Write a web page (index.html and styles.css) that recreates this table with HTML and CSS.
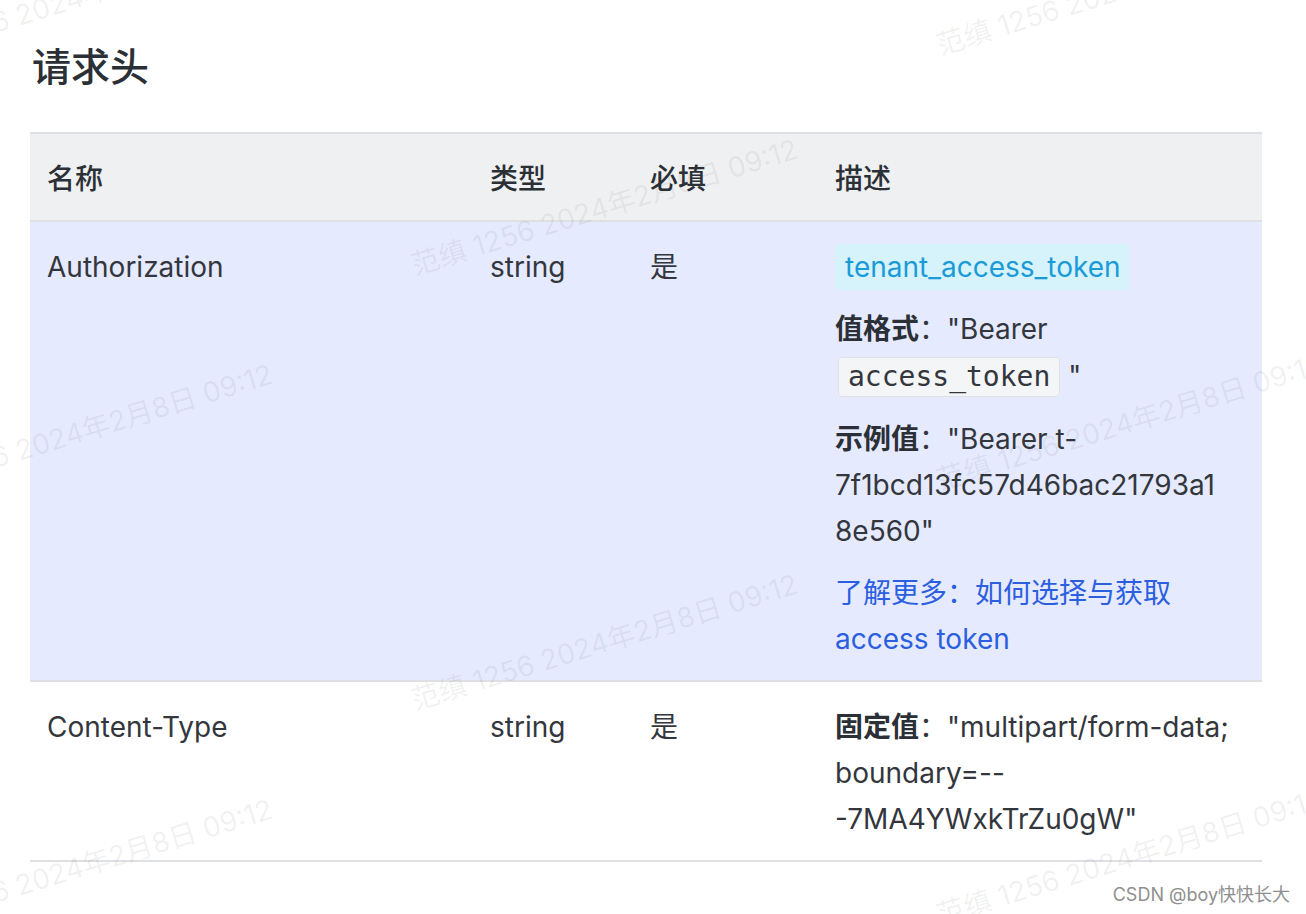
FILE: index.html
```html
<!DOCTYPE html>
<html lang="zh-CN">
<head>
    <meta charset="UTF-8">
    <meta name="viewport" content="width=device-width, initial-scale=1.0">
    <title>请求头</title>
    <link rel="stylesheet" href="styles.css">
</head>
<body>
    <div class="page">
        <h2 class="section-title">请求头</h2>
        <table class="param-table">
            <colgroup>
                <col class="col-name">
                <col class="col-type">
                <col class="col-required">
                <col class="col-desc">
            </colgroup>
            <thead>
                <tr>
                    <th>名称</th>
                    <th>类型</th>
                    <th>必填</th>
                    <th>描述</th>
                </tr>
            </thead>
            <tbody>
                <tr class="row-highlight">
                    <td>Authorization</td>
                    <td>string</td>
                    <td>是</td>
                    <td class="desc">
                        <p><span class="tag">tenant_access_token</span></p>
                        <p class="code-line"><strong>值格式</strong>："Bearer <code>access_token</code> "</p>
                        <p><strong>示例值</strong>："Bearer t-<wbr>7f1bcd13fc57d46bac21793a1<wbr>8e560"</p>
                        <p><a class="link" href="#">了解更多：如何选择与获取 access token</a></p>
                    </td>
                </tr>
                <tr>
                    <td>Content-Type</td>
                    <td>string</td>
                    <td>是</td>
                    <td class="desc">
                        <p><strong>固定值</strong>："multipart/form-data; boundary=--<wbr>-7MA4YWxkTrZu0gW"</p>
                    </td>
                </tr>
            </tbody>
        </table>
    </div>

    <!-- watermark overlay -->
    <div class="watermarks">
        <span class="wm wm-b0">范缜 1256 2024年2月8日 09:12</span>
        <span class="wm wm-c0">范缜 1256 2024年2月8日 09:12</span>
        <span class="wm wm-a1">范缜 1256 2024年2月8日 09:12</span>
        <span class="wm wm-b1">范缜 1256 2024年2月8日 09:12</span>
        <span class="wm wm-c1">范缜 1256 2024年2月8日 09:12</span>
        <span class="wm wm-a2">范缜 1256 2024年2月8日 09:12</span>
        <span class="wm wm-b2">范缜 1256 2024年2月8日 09:12</span>
        <span class="wm wm-c2">范缜 1256 2024年2月8日 09:12</span>
    </div>
    <div class="credit">CSDN @boy快快长大</div>
</body>
</html>
```

FILE: styles.css
```css
html, body {
    margin: 0;
    background: #ffffff;
}
body {
    position: relative;
    height: 914px;
    overflow: hidden;
    font-family: Inter, "Noto Sans CJK SC", sans-serif;
    color: #33373d;
}
.page {
    padding: 41px 44px 0 30px;
}
.section-title {
    margin: 0 0 39px 2px;
    font-size: 39px;
    line-height: 52px;
    font-weight: 500;
    color: #2b2f36;
}

.param-table {
    width: 1232px;
    border-collapse: collapse;
    table-layout: fixed;
    font-size: 28px;
    line-height: 46px;
}
.col-name { width: 443px; }
.col-type { width: 160px; }
.col-required { width: 185px; }
.col-desc { width: 444px; }

.param-table th {
    background: #eff0f1;
    border-top: 2px solid #dee0e3;
    border-bottom: 2px solid #dee0e3;
    padding: 22px 17px 18px;
    text-align: left;
    font-weight: 500;
    color: #2b2f36;
}
.param-table td {
    border-bottom: 2px solid #dee0e3;
    padding: 22px 17px 18px;
    vertical-align: top;
    overflow-wrap: anywhere;
}
.row-highlight td {
    background: #e6eaff;
}

.desc p {
    margin: 0 0 16px;
}
.desc p:last-child {
    margin-bottom: 0;
}
.desc .code-line {
    line-height: 47px;
}
.desc strong {
    font-weight: 700;
    color: #2b2f36;
}
.tag {
    background: #d6f2fb;
    color: #1a9bd7;
    padding: 6px 8px 6px 10px;
    border-radius: 4px;
}
code {
    font-family: "DejaVu Sans Mono", "Liberation Mono", monospace;
    font-size: 28px;
    background: #f4f5f6;
    border: 1px solid #dee0e3;
    border-radius: 4px;
    padding: 2px 9px 3px;
    margin-left: 3px;
}
.link {
    color: #2b5fe0;
    text-decoration: none;
}

.watermarks {
    position: absolute;
    inset: 0;
    pointer-events: none;
    overflow: hidden;
}
.wm {
    position: absolute;
    white-space: nowrap;
    font-size: 28px;
    color: rgba(31, 35, 41, 0.07);
    transform: translate(-50%, -50%) rotate(-17deg);
}
.wm-b0 { left: 79px; top: -5px; }
.wm-c0 { left: 1129px; top: -15px; }
.wm-a1 { left: 604px; top: 205px; }
.wm-b1 { left: 79px; top: 430px; }
.wm-c1 { left: 1129px; top: 420px; }
.wm-a2 { left: 604px; top: 640px; }
.wm-b2 { left: 79px; top: 865px; }
.wm-c2 { left: 1129px; top: 855px; }

.credit {
    position: absolute;
    right: 16px;
    bottom: 8px;
    font-size: 18px;
    color: #8f8f8f;
}
```
